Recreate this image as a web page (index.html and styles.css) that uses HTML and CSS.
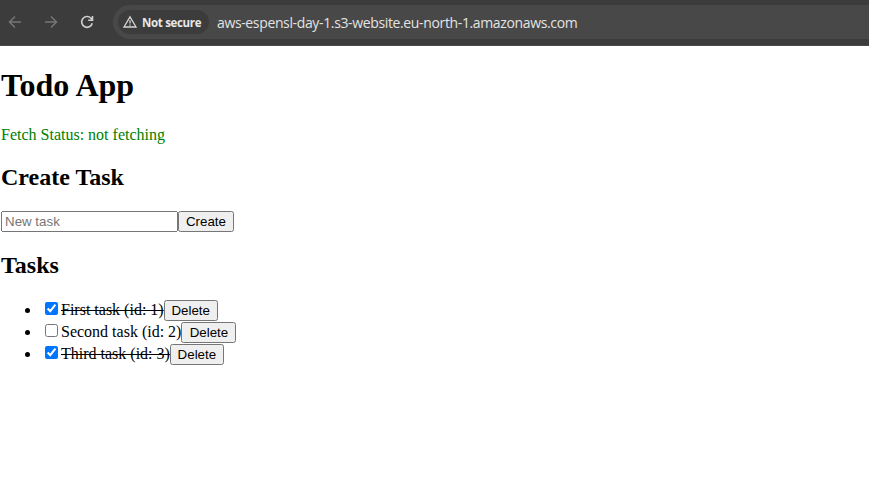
FILE: index.html
```
<!DOCTYPE html>
<html lang="en">
<head>
<meta charset="utf-8">
<title>Todo App</title>
<link rel="stylesheet" href="styles.css">
</head>
<body>
<header class="toolbar">
  <svg class="nav dim" viewBox="0 0 16 16"><path d="M14 8H3M8 2.500L2.500 8L8 13.500"/></svg>
  <svg class="nav dim" viewBox="0 0 16 16"><path d="M2 8H13M8 2.500L13.500 8L8 13.500"/></svg>
  <svg class="nav" viewBox="0 0 16 16"><path d="M13.300 9.300A5.400 5.400 0 1 1 12 4.200L13.500 5.800M13.500 2V6.300H9.200"/></svg>
  <div class="address">
    <span class="chip"><svg class="warn" viewBox="0 0 14 14"><path d="M7 1.800L13 12H1ZM7 5.300V8.600M7 9.500V10.800"/></svg>Not secure</span>
    <span class="url">aws-espensl-day-1.s3-website.eu-north-1.amazonaws.com</span>
  </div>
</header>
<main>
  <h1>Todo App</h1>
  <p class="status">Fetch Status: not fetching</p>
  <h2>Create Task</h2>
  <form class="create"><input class="field" type="text" placeholder="New task"><button type="button" class="create-btn">Create</button></form>
  <h2>Tasks</h2>
  <ul>
    <li><div class="task"><input type="checkbox" checked><span class="name done">First task (id: 1)</span><button>Delete</button></div></li>
    <li><div class="task"><input type="checkbox"><span class="name">Second task (id: 2)</span><button class="wide">Delete</button></div></li>
    <li><div class="task"><input type="checkbox" checked><span class="name done">Third task (id: 3)</span><button>Delete</button></div></li>
  </ul>
</main>
</body>
</html>
```
FILE: styles.css
```
* { box-sizing: border-box; }
body { margin: 0; background: #fff; color: #000; font: 16px/18px "Liberation Serif", serif; overflow: hidden; }
.toolbar { height: 46px; padding: 0 0 1px 7px; display: flex; align-items: center; gap: 20px; background: #3c3c3c; border-bottom: 1px solid #484848; }
.nav { width: 16px; height: 16px; flex: none; fill: none; stroke: #d0d0d0; stroke-width: 1.6; }
.dim { stroke: #757575; }
.address { flex: 1; height: 34px; margin-left: -2px; padding-left: 5px; border-radius: 17px 0 0 17px; background: #484848; display: flex; align-items: center; }
.chip { width: 91px; height: 24px; padding-left: 5px; border-radius: 12px; background: #3c3c3c; color: #e8e8e8; display: flex; align-items: center; gap: 5px; font: 700 11.5px "Open Sans", sans-serif; letter-spacing: -0.33px; white-space: nowrap; }
.warn { width: 14px; height: 14px; flex: none; fill: none; stroke: #d5d5d5; stroke-width: 1.3; }
.url { margin-left: 8px; color: #e3e3e3; font: 14px "Open Sans", sans-serif; letter-spacing: -0.36px; white-space: nowrap; }
main { padding: 21px 1px 0; }
h1 { margin: 0; font-size: 32px; line-height: 37px; }
.status { margin: 22px 0 20px; color: green; }
h2 { margin: 0; font-size: 24px; line-height: 27px; }
.create { display: flex; height: 21px; margin: 20px 0; }
.field { width: 177px; height: 21px; font: 13.333px "Liberation Sans", sans-serif; }
button { height: 21px; width: 54px; padding: 1px 0; font: 13.333px "Liberation Sans", sans-serif; }
.create-btn { width: 56px; }
.wide { width: 55px; }
ul { margin: 20px 0; padding-left: 40px; }
li { height: 22px; line-height: 22px; }
.task { display: inline-flex; height: 22px; vertical-align: top; align-items: center; }
.task input { margin: 0 3px 3px 4px; }
.done { text-decoration: line-through; }
```
